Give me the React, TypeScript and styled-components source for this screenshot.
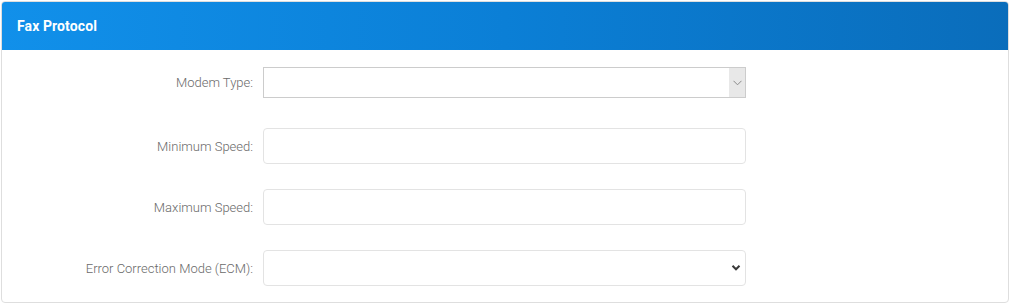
import { FC } from "react";
import styled, { createGlobalStyle } from "styled-components";

const GlobalStyle = createGlobalStyle`
  html, body {
    margin: 0;
    padding: 0;
    background: #fff;
    font-family: Roboto, "Liberation Sans", Arial, sans-serif;
  }
`;

const Page = styled.div`
  padding: 1px 1px 0 1px;
  width: 1008px;
`;

const Card = styled.div`
  border: 1px solid #dedede;
  border-radius: 4px;
  overflow: hidden;
  background: #fff;
  box-sizing: border-box;
  height: 302px;
`;

const Header = styled.div`
  height: 49px;
  margin: -1px -1px 0 -1px;
  padding: 0 16px;
  display: flex;
  align-items: center;
  background: linear-gradient(90deg, #1190ea 0%, #0b7fd6 50%, #0a6dbb 100%);
  color: #fff;
  font-size: 14px;
  font-weight: 700;
  letter-spacing: 0.1px;
  border-radius: 4px 4px 0 0;
`;

const Body = styled.div`
  padding: 17px 0 16px 0;
  display: flex;
  flex-direction: column;
  gap: 25px;
`;

const Row = styled.div<{ $first?: boolean }>`
  display: grid;
  grid-template-columns: 251px 483px;
  column-gap: 10px;
  align-items: center;
  margin-bottom: ${(p) => (p.$first ? "5px" : "0")};
`;

const Label = styled.label`
  text-align: right;
  font-size: 13px;
  font-weight: 300;
  color: #6a6a6a;
`;

const Field = styled.div`
  position: relative;
`;

const PlainSelect = styled.select`
  appearance: none;
  width: 100%;
  height: 31px;
  border: 1px solid #cccccc;
  border-radius: 0;
  background: #fff;
  box-sizing: border-box;
  font: inherit;
  font-size: 12px;
  outline: none;
`;

const ArrowBox = styled.div`
  position: absolute;
  top: 1px;
  right: 1px;
  bottom: 1px;
  width: 16px;
  background: #e8e8e8;
  display: flex;
  align-items: center;
  justify-content: center;
  pointer-events: none;
`;

const TextInput = styled.input`
  width: 100%;
  height: 36px;
  border: 1px solid #e3e3e3;
  border-radius: 4px;
  box-sizing: border-box;
  padding: 0 10px;
  font: inherit;
  font-size: 12px;
  outline: none;
`;

const RoundSelect = styled.select`
  appearance: none;
  width: 100%;
  height: 36px;
  border: 1px solid #e3e3e3;
  border-radius: 4px;
  background: #fff;
  box-sizing: border-box;
  font: inherit;
  font-size: 12px;
  outline: none;
`;

const Chevron = styled.svg`
  position: absolute;
  right: 5px;
  top: 50%;
  margin-top: -4px;
  pointer-events: none;
`;

const App: FC = () => {
  return (
    <>
      <GlobalStyle />
      <Page>
        <Card>
          <Header>Fax Protocol</Header>
          <Body>
            <Row $first>
              <Label>Modem Type:</Label>
              <Field>
                <PlainSelect defaultValue="">
                  <option value=""></option>
                </PlainSelect>
                <ArrowBox>
                  <svg width="9" height="6" viewBox="0 0 9 6">
                    <path d="M0.5 0.8 L4.5 4.8 L8.5 0.8" fill="none" stroke="#8a8a8a" strokeWidth="1" />
                  </svg>
                </ArrowBox>
              </Field>
            </Row>
            <Row>
              <Label>Minimum Speed:</Label>
              <Field>
                <TextInput type="text" />
              </Field>
            </Row>
            <Row>
              <Label>Maximum Speed:</Label>
              <Field>
                <TextInput type="text" />
              </Field>
            </Row>
            <Row>
              <Label>Error Correction Mode (ECM):</Label>
              <Field>
                <RoundSelect defaultValue="">
                  <option value=""></option>
                </RoundSelect>
                <Chevron width="10" height="8" viewBox="0 0 10 8">
                  <path d="M1.5 1.8 L5 5.3 L8.5 1.8" fill="none" stroke="#3a3a3a" strokeWidth="2" />
                </Chevron>
              </Field>
            </Row>
          </Body>
        </Card>
      </Page>
    </>
  );
};

export default App;
